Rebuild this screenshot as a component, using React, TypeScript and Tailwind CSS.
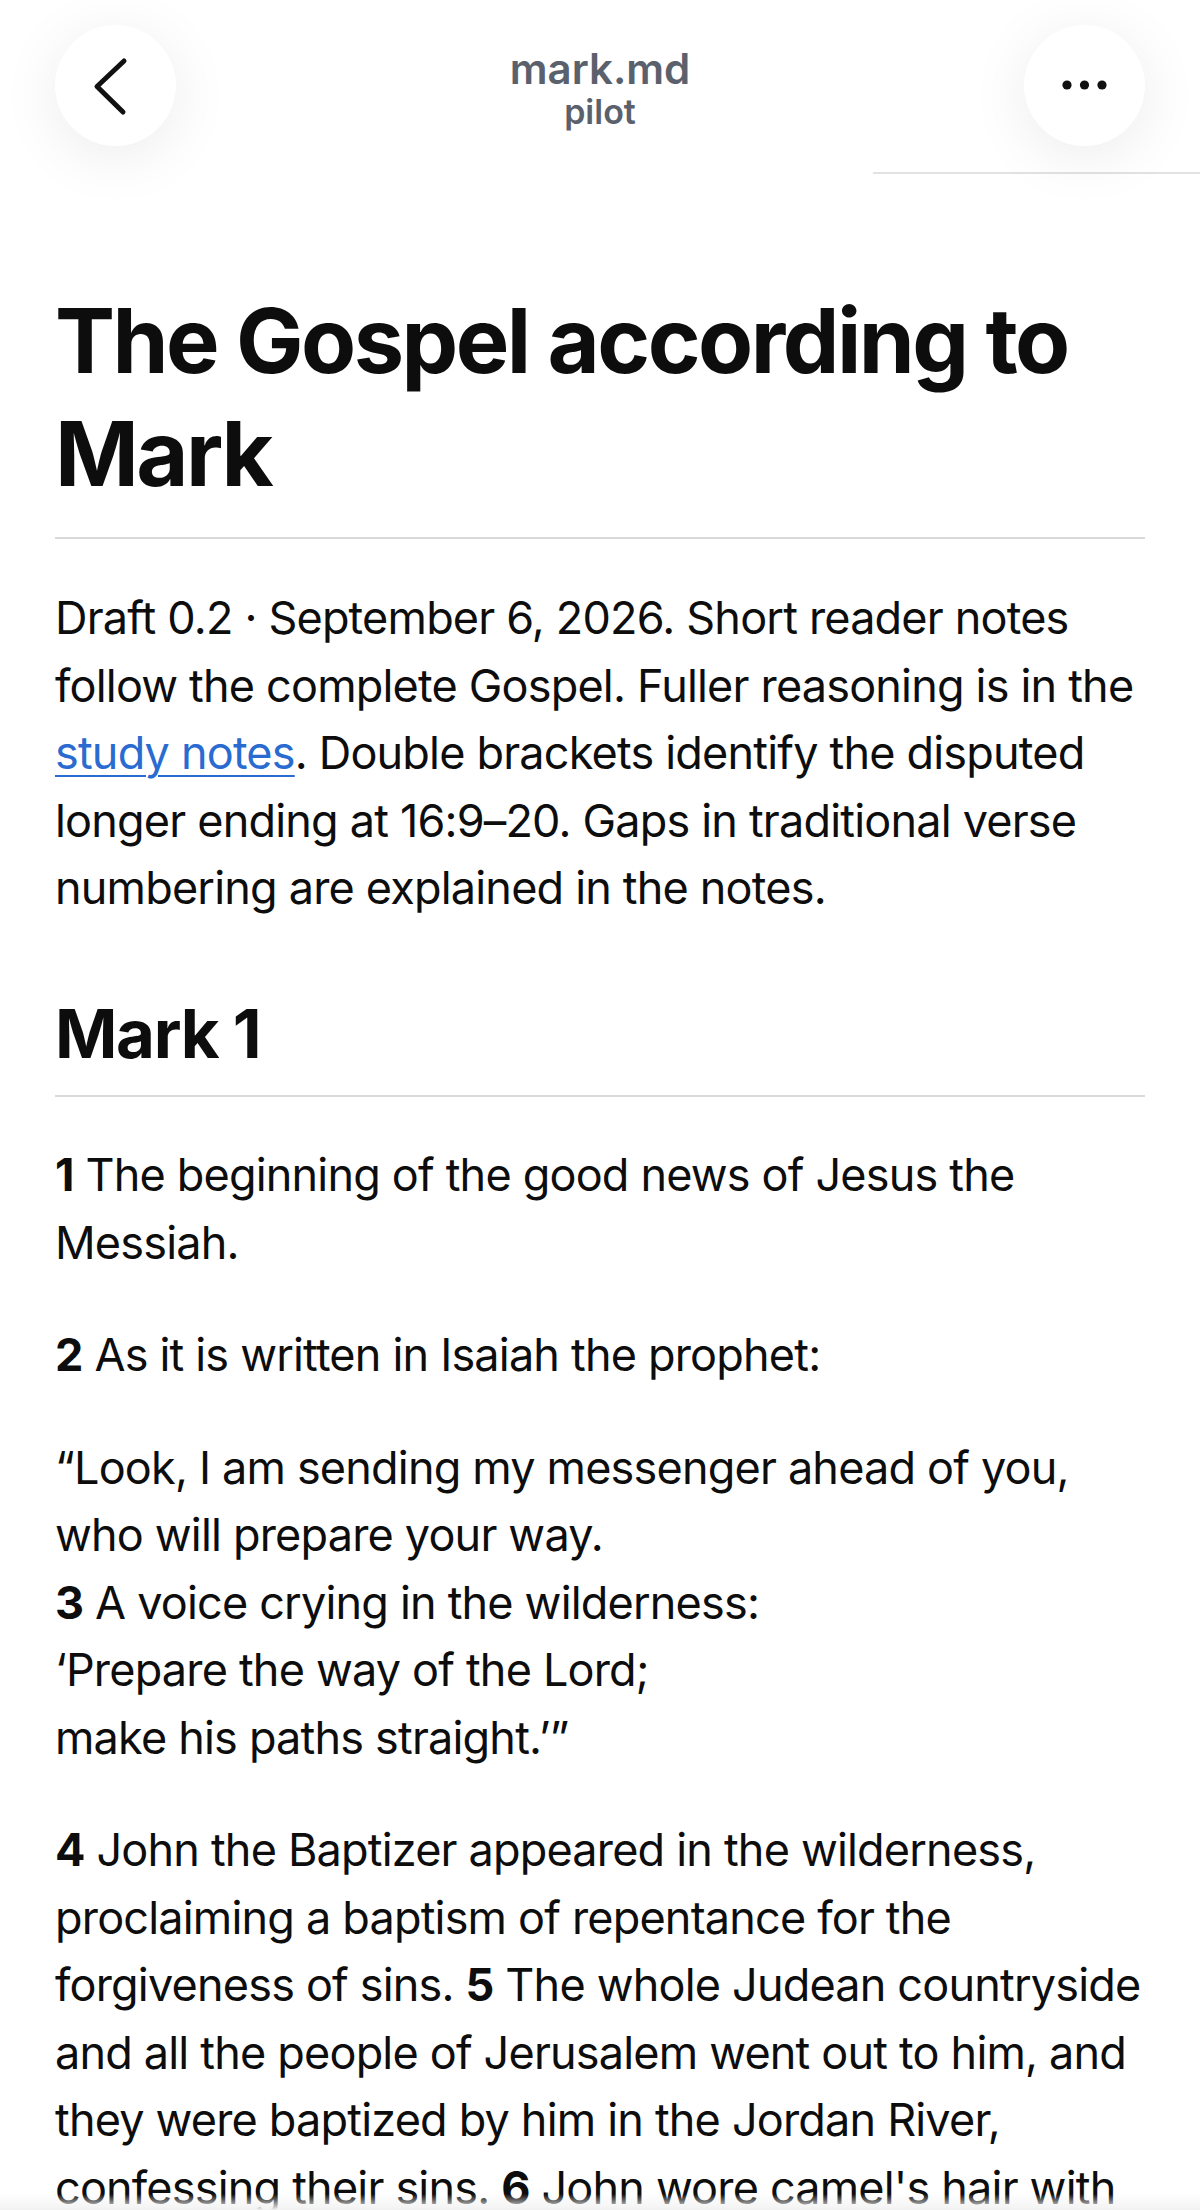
import React from "react";

const ink = "text-[#0d0d0d]";

function Header() {
  return (
    <header className="relative flex h-[200px] items-start justify-between px-[55px] pt-[25px]">
      <div className="absolute left-[873px] right-0 top-[172px] h-[2px] bg-[#e2e2e2] shadow-[0_6px_24px_rgba(0,0,0,0.05)]" />
      <button className="relative h-[121px] w-[121px] rounded-full bg-white shadow-[0_10px_60px_rgba(0,0,0,0.08)]">
        <svg viewBox="0 0 121 121" className="absolute inset-0 h-full w-full">
          <path d="M69 36 L42 61.5 L68 87" fill="none" stroke="#111" strokeWidth="5" strokeLinecap="round" strokeLinejoin="round" />
        </svg>
      </button>
      <div className="flex h-[121px] flex-1 flex-col items-center justify-center pt-[4px]">
        <div className="text-[42px] font-semibold leading-[48px] text-[#5a616d]">mark.md</div>
        <div className="text-[34px] font-semibold leading-[38px] text-[#5a616d]">pilot</div>
      </div>
      <button className="relative h-[121px] w-[121px] rounded-full bg-white shadow-[0_10px_60px_rgba(0,0,0,0.08)]">
        <svg viewBox="0 0 121 121" className="absolute inset-0 h-full w-full">
          <circle cx="43" cy="60" r="4.6" fill="#111" />
          <circle cx="60.5" cy="60" r="4.6" fill="#111" />
          <circle cx="78" cy="60" r="4.6" fill="#111" />
        </svg>
      </button>
    </header>
  );
}

function V({ n }: { n: number }) {
  return <b className="font-bold">{n}</b>;
}

export default function App() {
  return (
    <div className={`min-h-screen bg-white font-['Inter',sans-serif] ${ink}`}>
      <Header />
      <main className="px-[55px] pt-[85px] text-[45px] leading-[1.5] tracking-[-0.018em]">
        <h1 className="border-b-2 border-[#d9d9d9] pb-[27px] text-[90px] font-bold leading-[1.25] tracking-[-0.028em]">
          The Gospel according to Mark
        </h1>
        <p className="mt-[45px]">
          Draft 0.2 · September 6, 2026. Short reader notes follow the complete Gospel. Fuller reasoning is in the{" "}
          <a href="#notes" className="text-[#2a6bd1] underline decoration-[2px] underline-offset-[6px]">
            study notes
          </a>
          . Double brackets identify the disputed longer ending at 16:9–20. Gaps in traditional verse numbering are
          explained in the notes.
        </p>
        <h2 className="mt-[70px] border-b-2 border-[#d9d9d9] pb-[20px] text-[67px] font-bold leading-[1.25] tracking-[-0.02em]">
          Mark 1
        </h2>
        <p className="mt-[44px]">
          <V n={1} /> The beginning of the good news of Jesus the Messiah.
        </p>
        <p className="mt-[45px]">
          <V n={2} /> As it is written in Isaiah the prophet:
        </p>
        <p className="mt-[45px]">
          “Look, I am sending my messenger ahead of you,
          <br />
          who will prepare your way.
          <br />
          <V n={3} /> A voice crying in the wilderness:
          <br />
          ‘Prepare the way of the Lord;
          <br />
          make his paths straight.’”
        </p>
        <p className="mt-[45px]">
          <V n={4} /> John the Baptizer appeared in the wilderness, proclaiming a baptism of repentance for the
          forgiveness of sins. <V n={5} /> The whole Judean countryside and all the people of Jerusalem went out to him,
          and they were baptized by him in the Jordan River, confessing their sins. <V n={6} /> John wore camel's hair
          with a leather belt around his waist, and he ate locusts and wild honey. <V n={7} /> He proclaimed, “One more
          powerful than I is coming after me. I am not worthy to stoop down and untie the strap of his sandals.”
        </p>
      </main>
      <div className="pointer-events-none fixed inset-x-0 bottom-0 h-[16px] bg-gradient-to-b from-transparent to-[#f2f2f2]" />
    </div>
  );
}
